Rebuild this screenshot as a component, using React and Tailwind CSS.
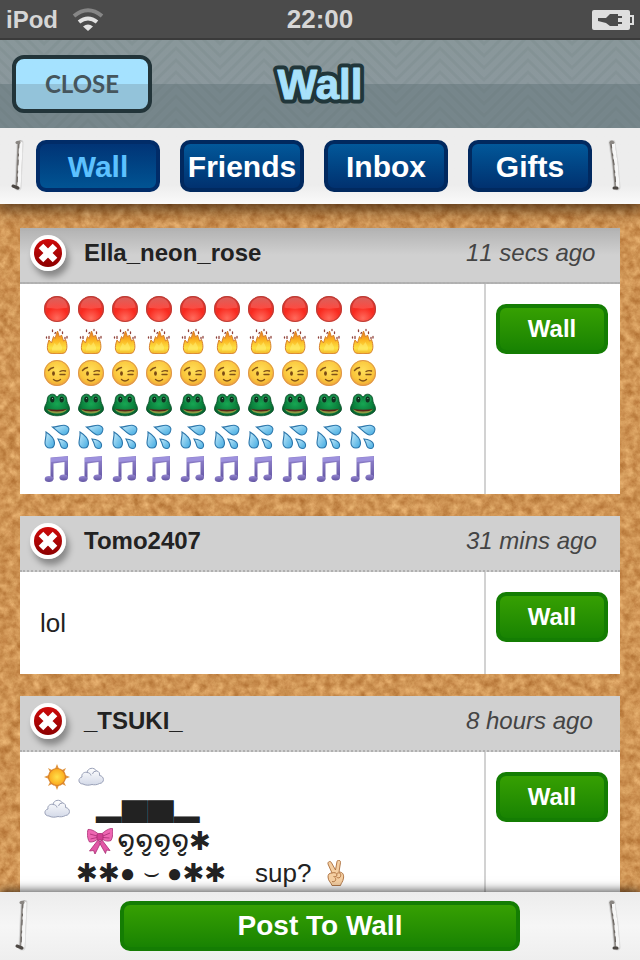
const disc = "M13 0a13 13 0 1 0 0 26a13 13 0 1 0 0-26";

function Defs() {
  return (
    <svg width="0" height="0" className="absolute" aria-hidden="true">
      <defs>
        <radialGradient id="ball" cx="50%" cy="85%" r="85%">
          <stop offset="0" stopColor="#ff6a5c" />
          <stop offset="0.5" stopColor="#f92a1f" />
          <stop offset="1" stopColor="#d83a34" />
        </radialGradient>
        <linearGradient id="shine" x1="0" y1="0" x2="0" y2="1">
          <stop offset="0" stopColor="#d87a76" />
          <stop offset="1" stopColor="#ff6058" />
        </linearGradient>
        <linearGradient id="flame" x1="0" y1="0" x2="0" y2="1">
          <stop offset="0" stopColor="#e8761c" />
          <stop offset="0.4" stopColor="#fbb421" />
          <stop offset="0.75" stopColor="#fde242" />
          <stop offset="1" stopColor="#f3b82c" />
        </linearGradient>
        <radialGradient id="face" cx="50%" cy="40%" r="60%">
          <stop offset="0" stopColor="#ffdf5a" />
          <stop offset="0.7" stopColor="#fac53a" />
          <stop offset="1" stopColor="#eda03a" />
        </radialGradient>
        <radialGradient id="frog" cx="50%" cy="45%" r="60%">
          <stop offset="0" stopColor="#17a653" />
          <stop offset="0.6" stopColor="#0b823d" />
          <stop offset="1" stopColor="#07592b" />
        </radialGradient>
        <linearGradient id="drop" x1="0" y1="0" x2="1" y2="1">
          <stop offset="0" stopColor="#c9ecfb" />
          <stop offset="1" stopColor="#3fa9e0" />
        </linearGradient>
        <linearGradient id="note" x1="0" y1="0" x2="0" y2="1">
          <stop offset="0" stopColor="#9486cf" />
          <stop offset="1" stopColor="#6355a3" />
        </linearGradient>
        <radialGradient id="sun">
          <stop offset="0" stopColor="#ffe14a" />
          <stop offset="1" stopColor="#fba81c" />
        </radialGradient>
        <linearGradient id="cloud" x1="0" y1="0" x2="0" y2="1">
          <stop offset="0" stopColor="#ffffff" />
          <stop offset="1" stopColor="#d3d9e8" />
        </linearGradient>
        <linearGradient id="delete" x1="0" y1="0" x2="0" y2="1">
          <stop offset="0" stopColor="#cf0a0a" />
          <stop offset="1" stopColor="#8c0000" />
        </linearGradient>
      </defs>
    </svg>
  );
}

const drawings = {
  ball: (
    <>
      <path d={disc} fill="url(#ball)" />
      <circle cx="13" cy="13" r="12.5" fill="none" stroke="#b3403a" strokeWidth="1" />
      <path d="M2.5 11.5C3 5 7.5 1.5 13 1.5S23 5 23.5 11.5C20 13 6 13 2.5 11.5z" fill="url(#shine)" opacity="0.6" />
    </>
  ),
  fire: (
    <>
      <path
        d="M5.500 25C2.500 22 3 17.500 5 12L7.500 15L9.500 8.500L11 10.500L13.500 3L15.500 9L17.500 7L19.500 13L21.500 11.500C23.500 17 23.500 22 20.500 25C17 26 9 26 5.500 25z"
        fill="url(#flame)"
        stroke="#d8822c"
        strokeWidth="1"
      />
      <path d="M8 22.500C7.500 19.500 9.500 18 10.500 15L13 17.500L15.500 14C17 17.500 19 19 17.500 22.500z" fill="#fff07a" opacity="0.5" />
      <path
        d="M8.500 2v1.500M16 1.500v1M18.500 4v1.500M2.500 9v1M5 8.500v2M23 8.500v1.500M21 9.500v1M11.500 4.500l-0.500 1"
        stroke="#8f4038"
        strokeWidth="1.300"
        strokeLinecap="round"
      />
    </>
  ),
  wink: (
    <>
      <path d={disc} fill="url(#face)" />
      <circle cx="13" cy="13" r="12.500" fill="none" stroke="#dc9450" strokeWidth="1" />
      <ellipse cx="9.500" cy="13.500" rx="1.400" ry="2.200" fill="#7a4a14" />
      <g fill="none" stroke="#7f5018" strokeWidth="1.400" strokeLinecap="round">
        <path d="M4.500 10.500Q6.500 8 9.500 7.500" />
        <path d="M16 11.500Q18.500 10 21.500 11" />
        <path d="M16 14.500H21" />
        <path d="M9.500 19.500Q13 22.500 16.500 19.500" />
      </g>
    </>
  ),
  frog: (
    <>
      <path
        d="M13 5.500C12 1.500 5 0.500 3.500 6C3 9 3 10.500 1.500 13C-0.500 17 0.500 19.500 4 21.500C9 24.500 17 24.500 22 21.500C25.500 19.500 26.500 17 24.500 13C23 10.500 23 9 22.500 6C21 0.500 14 1.500 13 5.500z"
        fill="url(#frog)"
        stroke="#064d25"
        strokeWidth="0.800"
      />
      <circle cx="8" cy="7" r="3.700" fill="#1c9350" />
      <circle cx="18" cy="7" r="3.700" fill="#1c9350" />
      <ellipse cx="8.300" cy="7.500" rx="2.100" ry="2.900" fill="#10321f" />
      <ellipse cx="17.700" cy="7.500" rx="2.100" ry="2.900" fill="#10321f" />
      <circle cx="8.500" cy="6.500" r="0.500" fill="#a7e5c2" />
      <circle cx="17.900" cy="6.500" r="0.500" fill="#a7e5c2" />
      <path d="M3 17.500Q13 19.500 23 17.500Q20 21.500 13 21.500Q6 21.500 3 17.500z" fill="#8f9a45" />
      <path d="M3 17Q13 18.500 23 17Q20 19.500 13 19.500Q6 19.500 3 17z" fill="#5c2418" />
    </>
  ),
  sweat: (
    <g fill="url(#drop)" stroke="#2b76ab" strokeWidth="1.100">
      <path d="M2 8C6 10.500 10.500 14.500 10.500 19C10.500 22.500 8.500 24 6 24C3 24 1 22 1 19C1 15.500 2.500 12 2 8z" />
      <path d="M8.500 3C13 3 18 0.500 21.500 1.500C25.500 2.500 25.500 6 24 8.500C22.500 11 19.500 11.500 17 10C13.500 8 11.500 5.500 8.500 3z" />
      <path d="M14 15C18 15.500 21.500 16.500 23 19C24.500 22 23 24.500 21 24.500C18.500 24.500 17 23.500 16.500 21C16 18.500 15 17 14 15z" />
    </g>
  ),
  music: (
    <>
      <g fill="url(#note)">
        <path d="M6.500 1.500L24 0V21H20.500V6L9.500 7.500V23.500H6.500z" />
        <ellipse cx="5" cy="23" rx="4.300" ry="3" />
        <ellipse cx="19.700" cy="21.500" rx="4.300" ry="3" />
      </g>
      <path d="M7 2L23.500 0.500V4.500L7 6z" fill="#9d91dd" />
    </>
  ),
  sun: (
    <>
      <path
        d="M13 0L15 5H11zM13 26L11 21H15zM0 13L5 11V15zM26 13L21 15V11zM4 4L9 6.500L6.500 9zM22 4L19.500 9L17 6.500zM4 22L6.500 17L9 19.500zM22 22L17 19.500L19.500 17z"
        fill="#e0953e"
      />
      <circle cx="13" cy="13" r="8.500" fill="url(#sun)" stroke="#d9822b" strokeWidth="1.200" />
    </>
  ),
  cloud: (
    <path
      d="M5 20C0 20 -0.500 14 4 13C3 9.500 7 7.500 9 8.500C9.500 4 16 2.500 18.500 7C21 7 22 9.500 21.500 11.500C26.500 12 27 19 21.500 19.500C19 21 16 21 14 20.500C11 21.500 7.500 21.500 5 20zM9 8.500C11 8.500 12.500 9.500 13 11.500M18.500 7Q15 7 14.500 10"
      fill="url(#cloud)"
      stroke="#9aa1b8"
      strokeWidth="1"
    />
  ),
  bow: (
    <g stroke="#a82c72" strokeWidth="0.800">
      <path d="M11 12L2.500 23L6.500 22.500L8 26L14 14zM15 12L23 22.500L19.500 22L18.500 25.500L12 14z" fill="#e257a6" />
      <path d="M12 6.500C8 3 4 1 1 1.500C0 5 0 10 2.500 14C6 14.500 9.500 12.500 12 10z" fill="#ee66b2" />
      <path d="M14 6.500C18 3 22 0 25.500 0.500C26 5 26 9 24 12.500C20 14 16.500 12.500 14 10z" fill="#ee66b2" />
      <path d="M3 6L10 8M3.500 11L10 9.500M23 5L16 8M22.500 10L16 9.500" fill="none" />
      <rect x="10" y="5.500" width="6" height="6.500" rx="1.500" fill="#d23f92" />
    </g>
  ),
  peace: (
    <g fill="#f5cfa2" stroke="#a96c3a" strokeWidth="0.900" strokeLinejoin="round">
      <path d="M9 13L5 4C4.500 1.500 7.500 0.500 8.500 2.800L12.500 10L14 1.500C14.500 -0.500 17.800 0 17.500 2.500L16 12C20 12 21 15 20.500 18C20 22 18 23 17.500 25.500H9C8.500 23 5 21 5 17C5 14.500 6 13 9 13z" />
      <path d="M9 13C11.500 12 14 13 14 15C14 16.500 12 17 10.500 16.500M12 17.500C14 20 11.500 22.500 9 21.500M14 13.500C16 12 18.500 13 17.500 16.500C17 18 15 18.500 13.500 17" fill="none" />
    </g>
  ),
};

function Emoji({ name }) {
  return (
    <svg viewBox="0 0 26 26" className="mx-1 size-[26px] shrink-0" role="img" aria-label={name}>
      {drawings[name]}
    </svg>
  );
}

const rowOf = (name) => Array(10).fill({ emoji: name });

const posts = [
  {
    id: 1,
    name: "Ella_neon_rose",
    time: "11 secs ago",
    shaded: true,
    lines: ["ball", "fire", "wink", "frog", "sweat", "music"].map(rowOf),
  },
  { id: 2, name: "Tomo2407", time: "31 mins ago", lines: [["lol"]] },
  {
    id: 3,
    name: "_TSUKI_",
    time: "8 hours ago",
    lines: [
      [{ emoji: "sun" }, { emoji: "cloud" }],
      [{ emoji: "cloud" }, "   ", { blocks: "▂▇▇▂" }],
      ["      ", { emoji: "bow" }, { curls: "໑̮໑̮໑̮໑̮" }, "✱"],
      ["     ✱✱● ⌣ ●✱✱    sup? ", { emoji: "peace" }],
    ],
  },
];

const tabs = ["Wall", "Friends", "Inbox", "Gifts"];

function Staple({ side }) {
  const wire = side === "left" ? "M10 3L9 24L8 47" : "M4 3L7 24L9 47";
  return (
    <svg viewBox="0 0 16 52" className="h-[52px] w-4" aria-hidden="true">
      <g fill="none" strokeLinecap="round">
        <path d={wire} stroke="#bdbdbd" strokeWidth="7" opacity="0.45" />
        <path d={wire} stroke="#8f8b87" strokeWidth="5" />
        <path d={wire} stroke="#f7f7f7" strokeWidth="3.500" transform="translate(1 0)" />
        <path d={wire} stroke="#67625e" strokeWidth="1" strokeDasharray="5 6 2 4" transform="translate(-1 0)" />
        <path d={side === "left" ? "M9 2.500H7" : "M3 2.500H5"} stroke="#8a8682" strokeWidth="3" />
        <path d={side === "left" ? "M8 48L3 46" : "M9 48H6"} stroke="#4c4743" strokeWidth="3" />
      </g>
    </svg>
  );
}

function StatusBar() {
  return (
    <div className="grid h-10 shrink-0 grid-cols-3 items-center border-b-2 border-[#3a3a3a] bg-[#4b4b4b] px-[6px] font-bold text-[#d6d6d6]">
      <div className="flex items-center gap-[14px] text-2xl">
        iPod
        <svg viewBox="0 0 32 24" className="h-6 w-8" aria-label="Wi-Fi">
          <path d="M16 23L11 18.500Q16 14.500 21 18.500z" fill="#e2e2e2" />
          <path d="M7 14Q16 7 25 14" fill="none" stroke="#e2e2e2" strokeWidth="4" />
          <path d="M2 8Q16 -3.500 30 8" fill="none" stroke="#868686" strokeWidth="4" />
        </svg>
      </div>
      <div className="text-center text-[26px]">22:00</div>
      <svg viewBox="0 0 42 20" className="h-5 w-[42px] justify-self-end" aria-label="Battery charging">
        <rect width="38" height="20" rx="2" fill="#dedede" />
        <path d="M38 6H41V14H38" fill="none" stroke="#dedede" strokeWidth="2" />
        <path d="M6 8H14L18 4H26V6H30V8H26V12H30V14H26V16H18L14 13L6 11z" fill="#4b4b4b" />
      </svg>
    </div>
  );
}

function Header() {
  return (
    <header className="relative z-20 grid h-[88px] shrink-0 grid-cols-[1fr_auto_1fr] items-center bg-linear-to-b from-[#89979a] from-0% via-[#8b989d] via-50% to-[#76868b] to-50% px-3">
      <svg className="absolute inset-0 size-full" aria-hidden="true">
        <pattern id="chevrons" width="88" height="12" patternUnits="userSpaceOnUse">
          <path
            d="M-4 -8L44 40L92 -8M-4 -20L44 28L92 -20M-4 -32L44 16L92 -32M-4 -44L44 4L92 -44M-4 4L44 52L92 4"
            fill="none"
            stroke="#5d6c6c"
            strokeWidth="3"
            opacity="0.12"
          />
        </pattern>
        <rect width="100%" height="100%" fill="url(#chevrons)" />
      </svg>
      <button
        type="button"
        className="relative h-[58px] w-[140px] rounded-xl border-4 border-[#223439] bg-linear-to-b from-[#a5e2ff] from-50% to-[#93c3da] to-50% font-['Lato'] text-2xl font-bold text-[#46565d]"
      >
        CLOSE
      </button>
      <h1 className="relative">
        <svg viewBox="0 0 100 56" className="h-14 w-[100px]">
          <g fontSize="42" fontWeight="700" textAnchor="middle" strokeLinejoin="round">
            <text x="50" y="43" fill="#21363a" stroke="#21363a" strokeWidth="9">
              Wall
            </text>
            <text x="50" y="43" fill="#a8e1fb" stroke="#a8e1fb" strokeWidth="1" aria-hidden="true">
              Wall
            </text>
          </g>
        </svg>
      </h1>
    </header>
  );
}

function Tabs() {
  return (
    <nav className="relative z-10 flex h-[76px] shrink-0 items-center bg-linear-to-b from-[#ededed] from-75% to-[#fafafa] shadow-[0_2px_14px_4px_rgba(50,25,5,0.75)]">
      <div className="flex w-9 justify-center">
        <Staple side="left" />
      </div>
      <div className="grid flex-1 grid-cols-4 gap-5">
        {tabs.map((tab, i) => (
          <button
            key={tab}
            type="button"
            className={
              i === 0
                ? "flex h-[52px] items-center justify-center rounded-[10px] border-4 border-[#012c68] bg-linear-to-b from-[#013476] to-[#015493] text-[30px] font-bold text-[#5cc1ff]"
                : "flex h-[52px] items-center justify-center rounded-[10px] border-4 border-[#01295f] bg-linear-to-b from-[#02589a] to-[#01316f] text-[30px] font-bold text-white"
            }
          >
            {tab}
          </button>
        ))}
      </div>
      <div className="flex w-12 justify-center">
        <Staple side="right" />
      </div>
    </nav>
  );
}

function Cork() {
  return (
    <svg className="absolute inset-0 size-full" aria-hidden="true">
      <filter id="cork" x="0" y="0" width="100%" height="100%" colorInterpolationFilters="sRGB">
        <feTurbulence type="fractalNoise" baseFrequency="0.12" numOctaves="4" seed="7" />
        <feColorMatrix
          values="0.3 0.1 0 0 0.61
                  0.36 0.1 0 0 0.35
                  0.34 0.1 0 0 0.11
                  0 0 0 0 1"
        />
      </filter>
      <rect width="100%" height="100%" filter="url(#cork)" />
    </svg>
  );
}

function Piece({ piece }) {
  if (piece.emoji) return <Emoji name={piece.emoji} />;
  if (piece.blocks) return <span className="font-['Noto_Sans_CJK_JP'] leading-none">{piece.blocks}</span>;
  if (piece.curls) return <span className="font-['DejaVu_Sans'] text-[28px] leading-none">{piece.curls}</span>;
  return <span>{piece}</span>;
}

function Post({ post }) {
  return (
    <article className="bg-white text-[#222]">
      <header
        className={
          post.shaded
            ? "flex h-14 items-center border-b-2 border-dotted border-[#b0b0b0] bg-linear-to-b from-[#b2b2b2] to-[#d0d0d0] to-50% pl-[10px]"
            : "flex h-14 items-center border-b-2 border-dotted border-[#b0b0b0] bg-[#d0d0d0] pl-[10px]"
        }
      >
        <button type="button" aria-label="Delete" className="mb-1 rounded-full shadow-[3px_6px_6px_rgba(0,0,0,0.35)]">
          <svg viewBox="0 0 36 36" className="block size-9">
            <circle cx="18" cy="18" r="18" fill="#fff" />
            <circle cx="18" cy="18" r="14" fill="url(#delete)" />
            <path d="M11 11L25 25M25 11L11 25" stroke="#fff" strokeWidth="6.500" />
          </svg>
        </button>
        <h2 className="mb-1 ml-[18px] flex-1 text-2xl font-bold">{post.name}</h2>
        <time className="mb-1 w-[154px] text-2xl text-[#444] italic [font-kerning:none]">{post.time}</time>
      </header>
      <div className="flex">
        <div className="flex flex-1 flex-col justify-center px-5 py-[9px] text-[26px] leading-8">
          {post.lines.map((line, i) => (
            <div key={i} className="flex h-8 items-center whitespace-pre">
              {line.map((piece, j) => (
                <Piece key={j} piece={piece} />
              ))}
            </div>
          ))}
        </div>
        <div className="border-l-2 border-[#d2d2d2] pt-5 pr-3 pb-8 pl-[10px]">
          <button
            type="button"
            className="h-[50px] w-28 rounded-[10px] border-4 border-[#147d03] bg-linear-to-b from-[#36a002] to-[#188302] text-2xl font-bold text-white"
          >
            Wall
          </button>
        </div>
      </div>
    </article>
  );
}

function Footer() {
  return (
    <footer className="relative z-10 flex h-[68px] shrink-0 items-center bg-linear-to-b from-[#ececec] via-[#f6f6f6] to-[#eeeeee] shadow-[0_-1px_10px_rgba(0,0,0,0.75)]">
      <div className="flex w-[120px] pl-[14px]">
        <Staple side="left" />
      </div>
      <button
        type="button"
        className="h-[50px] flex-1 rounded-[10px] border-4 border-[#147d03] bg-linear-to-b from-[#36a002] to-[#188302] text-[28px] font-bold text-white"
      >
        Post To Wall
      </button>
      <div className="flex w-[120px] justify-end pr-4">
        <Staple side="right" />
      </div>
    </footer>
  );
}

export default function App() {
  return (
    <div className="flex h-screen flex-col font-['Liberation_Sans','DejaVu_Sans',sans-serif]">
      <Defs />
      <StatusBar />
      <Header />
      <Tabs />
      <main className="relative min-h-0 flex-1 overflow-y-auto [scrollbar-width:none]">
        <div className="relative">
          <Cork />
          <div className="relative flex flex-col gap-[22px] px-5 py-6">
            {posts.map((post) => (
              <Post key={post.id} post={post} />
            ))}
          </div>
        </div>
      </main>
      <Footer />
    </div>
  );
}
